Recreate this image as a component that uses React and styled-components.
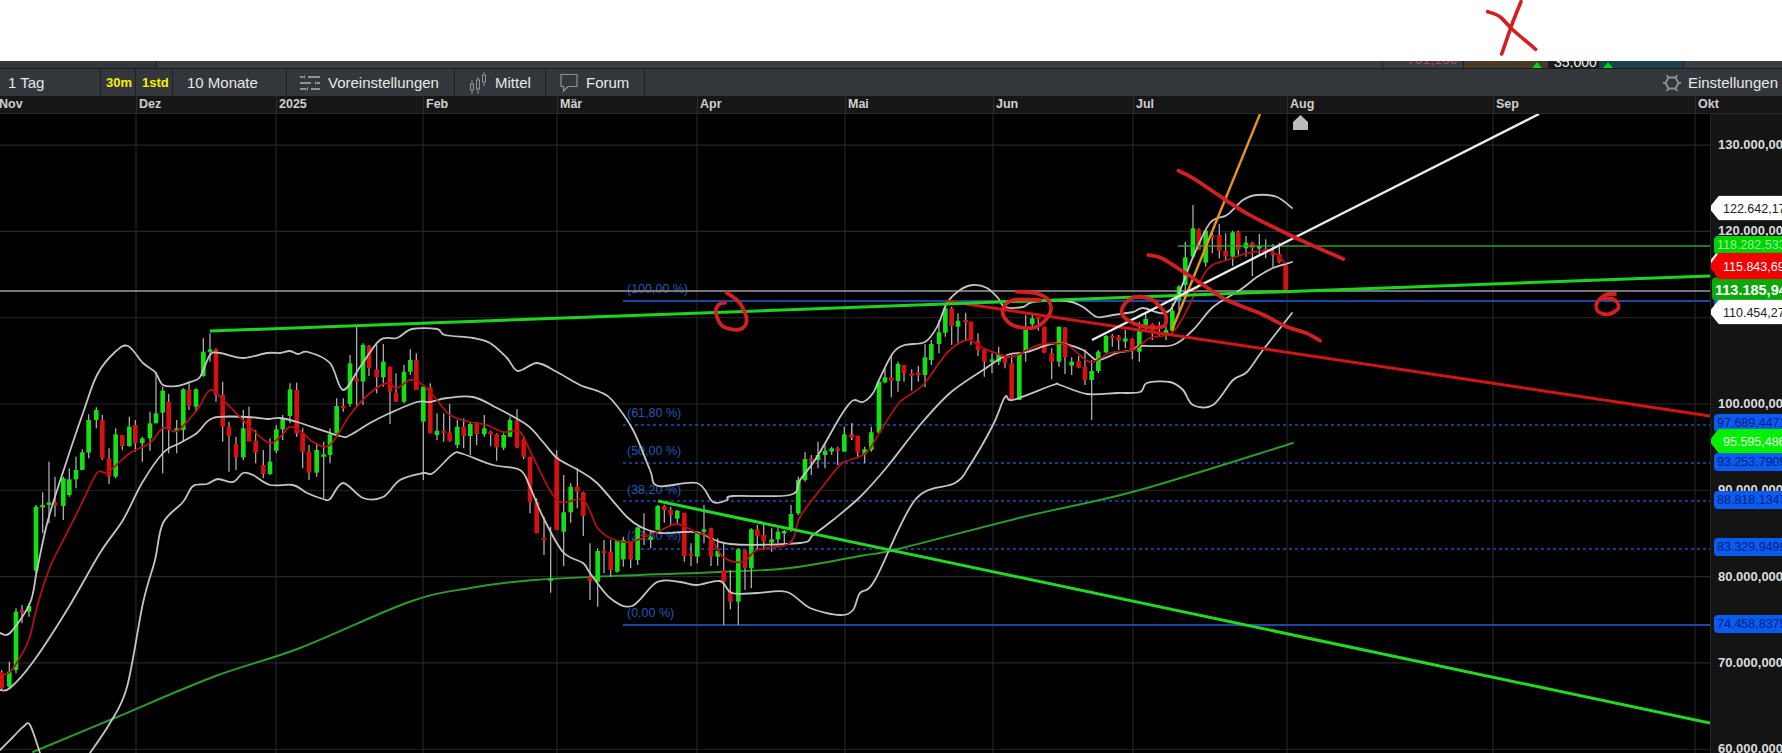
import React from 'react';
import styled, { createGlobalStyle } from 'styled-components';

const GlobalStyle = createGlobalStyle`
  html, body { margin: 0; padding: 0; background: #fff; }
  body { font-family: "Liberation Sans", Arial, sans-serif; overflow: hidden; }
`;

const W = 1710;
const H = 639; // chart area height, starts at y=114
const TOP = 114;

const priceY = (p) => 404 - (p - 100) * 8.63;

// [x, wickTop, wickBottom, bodyTop, bodyBottom, colour], read off crops, mapped back with crop()
const crop = (ox, oy, rows) =>
  rows.map(([x, a, b, c, d, k]) => [ox + x / 3, oy + a / 3, oy + b / 3, oy + c / 3, oy + d / 3, k]);

const cropPts = (ox, oy, rows) => rows.map(([x, y]) => [ox + x / 3, oy + y / 3]);

const parsePts = (str) => str.split(' ').map((s) => s.split(',').map(Number));

// catmull-rom through the points, the chart curves are not angular
const smooth = (pts) => {
  let d = `M${pts[0][0]} ${pts[0][1]}`;
  for (let i = 0; i < pts.length - 1; i++) {
    const p0 = pts[i - 1] || pts[i];
    const p1 = pts[i];
    const p2 = pts[i + 1];
    const p3 = pts[i + 2] || p2;
    const c1x = p1[0] + (p2[0] - p0[0]) / 6;
    const c1y = p1[1] + (p2[1] - p0[1]) / 6;
    const c2x = p2[0] - (p3[0] - p1[0]) / 6;
    const c2y = p2[1] - (p3[1] - p1[1]) / 6;
    d += `C${c1x.toFixed(1)} ${c1y.toFixed(1)} ${c2x.toFixed(1)} ${c2y.toFixed(1)} ${p2[0].toFixed(1)} ${p2[1].toFixed(1)}`;
  }
  return d;
};

const CANDLES = [
  ...crop(0, 320, [
    [5, 1050, 1110, 1060, 1105, 'r'], [28, 1025, 1105, 1055, 1100, 'g'], [48, 865, 1060, 875, 1050, 'g'],
    [66, 855, 910, 870, 875, 'r'], [87, 848, 890, 858, 875, 'g'], [108, 555, 760, 560, 752, 'g'],
    [128, 517, 640, 555, 560, 'g'], [147, 425, 610, 547, 553, 'g'], [165, 470, 590, 547, 557, 'r'],
    [190, 470, 600, 475, 558, 'g'], [208, 445, 530, 478, 525, 'g'], [228, 410, 505, 450, 478, 'g'],
    [247, 388, 450, 397, 450, 'g'], [266, 283, 415, 300, 398, 'g'], [289, 262, 325, 270, 300, 'g'],
    [307, 285, 420, 300, 415, 'r'], [327, 385, 492, 415, 470, 'r'], [347, 325, 475, 343, 470, 'g'],
    [367, 345, 390, 345, 378, 'r'], [388, 290, 380, 320, 378, 'g'], [406, 300, 395, 315, 370, 'r'],
    [427, 350, 425, 355, 370, 'g'], [450, 275, 392, 310, 355, 'g'], [468, 155, 310, 280, 310, 'g'],
    [488, 200, 460, 212, 278, 'g'], [506, 222, 400, 245, 327, 'r'], [530, 300, 400, 325, 330, 'g'],
    [550, 205, 365, 208, 330, 'g'], [567, 185, 270, 210, 258, 'r'], [588, 205, 275, 208, 260, 'g'],
    [610, 55, 170, 95, 168, 'g'], [630, 40, 125, 88, 95, 'g'], [648, 85, 245, 88, 225, 'r'],
    [668, 185, 365, 225, 320, 'r'], [687, 305, 455, 320, 348, 'r'], [708, 350, 450, 372, 412, 'r'],
    [730, 270, 420, 325, 412, 'g'], [747, 260, 345, 290, 365, 'r'], [767, 330, 430, 362, 398, 'r'],
    [790, 390, 475, 435, 462, 'r'], [810, 355, 465, 425, 462, 'g'], [829, 315, 400, 328, 392, 'g'],
    [848, 285, 360, 297, 328, 'g'], [870, 190, 310, 208, 288, 'g'], [890, 188, 350, 210, 340, 'r'],
  ]),
  ...crop(280, 300, [
    [68, 385, 505, 400, 455, 'r'], [87, 435, 540, 455, 518, 'r'], [110, 430, 530, 450, 518, 'g'],
    [131, 425, 595, 463, 467, 'g'], [150, 385, 490, 403, 465, 'g'], [170, 295, 400, 318, 400, 'g'],
    [190, 295, 335, 318, 323, 'r'], [210, 165, 320, 190, 312, 'g'], [230, 80, 320, 235, 245, 'r'],
    [249, 130, 315, 135, 245, 'g'], [267, 135, 228, 138, 205, 'r'], [290, 135, 280, 208, 232, 'r'],
    [310, 132, 260, 185, 232, 'g'], [330, 200, 372, 200, 275, 'r'], [348, 220, 305, 278, 305, 'r'],
    [372, 195, 310, 215, 305, 'g'], [391, 148, 225, 180, 215, 'g'], [409, 160, 270, 180, 270, 'r'],
    [430, 260, 540, 260, 365, 'g'], [451, 250, 400, 262, 400, 'r'], [471, 340, 420, 392, 405, 'g'],
    [491, 340, 425, 392, 396, 'r'], [509, 312, 425, 397, 423, 'r'], [532, 360, 445, 380, 435, 'g'],
    [551, 355, 445, 380, 408, 'r'], [571, 365, 465, 372, 408, 'g'], [590, 365, 435, 370, 402, 'r'],
    [613, 345, 410, 385, 403, 'g'], [632, 392, 438, 395, 403, 'r'], [650, 400, 482, 402, 442, 'r'],
    [671, 400, 450, 405, 443, 'g'], [690, 350, 410, 360, 410, 'g'], [711, 328, 445, 362, 442, 'r'],
    [731, 408, 478, 418, 470, 'r'], [750, 470, 640, 470, 605, 'r'], [770, 595, 700, 605, 700, 'r'],
  ]),
  ...crop(540, 400, [
    [12, 350, 465, 413, 420, 'r'], [32, 380, 578, 535, 540, 'g'], [50, 150, 390, 170, 390, 'r'],
    [71, 225, 498, 337, 395, 'g'], [92, 250, 368, 260, 337, 'g'], [112, 205, 325, 260, 275, 'r'],
    [130, 275, 408, 277, 348, 'r'], [150, 430, 600, 530, 543, 'r'], [173, 445, 620, 453, 545, 'g'],
    [192, 420, 520, 452, 455, 'r'], [212, 420, 530, 455, 510, 'r'], [232, 420, 518, 420, 515, 'g'],
    [250, 410, 500, 420, 478, 'g'], [272, 425, 505, 425, 478, 'r'], [293, 380, 495, 382, 480, 'g'],
    [312, 340, 435, 400, 405, 'r'], [332, 395, 445, 410, 420, 'g'], [353, 315, 390, 318, 390, 'g'],
    [373, 315, 368, 318, 330, 'r'], [392, 320, 375, 330, 345, 'r'], [412, 330, 375, 332, 356, 'g'],
    [433, 338, 485, 338, 468, 'r'], [453, 430, 498, 460, 465, 'r'], [472, 395, 490, 395, 470, 'g'],
    [492, 315, 430, 388, 395, 'g'], [513, 383, 498, 385, 470, 'r'], [533, 415, 497, 452, 470, 'g'],
    [551, 425, 675, 510, 545, 'r'], [571, 510, 628, 575, 605, 'r'], [595, 445, 675, 448, 605, 'g'],
    [615, 450, 570, 450, 505, 'r'], [634, 385, 565, 388, 505, 'g'], [652, 375, 450, 388, 408, 'r'],
    [671, 370, 450, 405, 425, 'r'], [695, 385, 455, 418, 428, 'g'], [714, 385, 430, 395, 418, 'g'],
    [733, 390, 430, 393, 400, 'g'], [753, 315, 395, 342, 385, 'g'], [775, 230, 345, 240, 340, 'g'],
    [795, 157, 245, 177, 240, 'g'], [814, 165, 225, 175, 180, 'r'], [834, 125, 205, 165, 180, 'g'],
    [855, 135, 205, 152, 165, 'g'], [875, 140, 165, 145, 155, 'g'], [893, 140, 195, 145, 150, 'r'],
    [913, 80, 155, 103, 155, 'g'], [935, 70, 120, 103, 106, 'r'],
  ]),
  ...crop(850, 270, [
    [5, 460, 510, 495, 498, 'r'], [23, 497, 565, 497, 548, 'r'], [44, 530, 580, 538, 552, 'g'],
    [64, 470, 545, 487, 540, 'g'], [87, 335, 490, 335, 488, 'g'], [105, 295, 340, 322, 337, 'g'],
    [124, 258, 382, 322, 332, 'r'], [144, 275, 365, 282, 333, 'g'], [162, 285, 335, 285, 310, 'r'],
    [185, 298, 362, 310, 313, 'r'], [205, 288, 335, 308, 312, 'r'], [225, 222, 352, 262, 315, 'g'],
    [244, 210, 285, 222, 270, 'g'], [267, 150, 250, 187, 222, 'g'], [286, 110, 200, 115, 188, 'g'],
    [305, 110, 225, 115, 168, 'r'], [324, 130, 225, 152, 170, 'g'], [347, 128, 210, 150, 152, 'r'],
    [363, 155, 225, 155, 210, 'r'], [384, 190, 258, 212, 240, 'r'], [403, 238, 320, 238, 275, 'r'],
    [426, 250, 310, 268, 275, 'g'], [446, 230, 285, 252, 275, 'g'], [465, 255, 295, 260, 280, 'r'],
    [485, 255, 390, 280, 390, 'r'], [508, 250, 390, 250, 390, 'g'], [527, 135, 275, 177, 245, 'g'],
    [547, 130, 175, 145, 163, 'g'], [565, 140, 182, 140, 148, 'r'], [583, 170, 250, 170, 248, 'r'],
    [605, 235, 328, 250, 275, 'r'], [627, 170, 290, 170, 275, 'g'], [645, 172, 312, 172, 262, 'r'],
    [665, 262, 315, 275, 287, 'g'], [686, 258, 295, 273, 293, 'r'], [705, 238, 345, 290, 330, 'r'],
    [725, 270, 450, 303, 330, 'g'], [745, 240, 310, 245, 303, 'g'], [768, 195, 250, 198, 247, 'g'],
    [787, 192, 230, 197, 200, 'r'], [806, 195, 240, 200, 212, 'r'], [826, 180, 235, 205, 215, 'g'],
    [847, 205, 268, 207, 240, 'r'], [868, 155, 275, 182, 245, 'g'], [887, 130, 180, 147, 165, 'g'],
  ]),
  ...crop(1100, 100, [
    [157, 670, 720, 672, 700, 'r'], [178, 665, 710, 695, 705, 'r'], [198, 680, 720, 690, 700, 'g'],
    [217, 610, 700, 632, 692, 'g'], [237, 555, 630, 560, 600, 'g'], [256, 425, 590, 472, 555, 'g'],
    [279, 315, 465, 385, 470, 'g'], [296, 385, 440, 388, 450, 'r'], [317, 390, 500, 392, 488, 'g'],
    [337, 400, 460, 405, 408, 'r'], [358, 372, 475, 405, 452, 'r'], [377, 400, 480, 452, 470, 'r'],
    [398, 392, 498, 397, 470, 'g'], [415, 392, 465, 397, 450, 'r'], [438, 408, 470, 428, 445, 'g'],
    [457, 425, 528, 428, 445, 'r'], [478, 402, 465, 438, 445, 'g'], [497, 418, 475, 445, 449, 'r'],
    [519, 432, 502, 458, 463, 'r'], [538, 428, 490, 462, 487, 'r'], [557, 490, 578, 495, 570, 'r'],
  ]),
];

const BAND_UPPER = parsePts('0,633 10,633 30,603 37,570 48,520 67,460 83,413 97,375 115,352 128,346 143,363 155,372 163,385 177,386 190,382 200,377 210,355 220,353 243,358 267,353 280,353 290,351 298,354 308,352 330,363 343,390 360,367 380,340 397,338 412,329 437,329 445,335 473,338 490,343 507,358 518,371 537,363 557,372 580,385 600,392 612,400 633,430 650,470 658,486 697,483 713,502 727,500 733,496 790,495 800,480 817,457 840,417 850,403 855,400 863,402 873,393 880,378 893,353 905,345 925,342 937,327 947,303 960,290 973,285 987,288 998,298 1005,307 1023,307 1033,302 1067,301 1083,307 1097,317 1113,315 1133,312 1143,308 1170,310 1193,257 1210,223 1227,215 1243,200 1257,195 1277,197 1292,208');
const BAND_MIDDLE = parsePts('0,690 10,688 33,662 67,610 100,553 123,520 142,483 163,453 180,443 197,433 213,418 247,417 267,419 280,418 297,422 340,436 350,435 370,423 390,413 417,402 430,402 447,398 473,397 497,408 527,425 543,442 557,458 578,470 597,483 627,517 643,528 660,533 683,532 700,533 730,544 800,543 813,535 833,520 860,497 887,467 920,425 950,393 983,370 1007,355 1027,352 1057,343 1083,350 1097,360 1117,353 1133,350 1140,346 1173,345 1193,330 1213,307 1240,290 1257,277 1273,268 1292,262');
const BAND_LOWER_A = parsePts('0,750 13,737 23,727 30,725 40,753');
const BAND_LOWER_B = parsePts('90,753 110,723 127,687 143,603 155,560 163,523 183,502 193,486 207,484 218,479 233,482 243,473 253,475 270,485 293,485 307,493 323,499 330,499 343,483 363,498 383,497 400,480 423,473 433,473 453,454 463,454 493,465 520,470 530,487 543,517 563,552 583,563 590,573 610,598 632,606 657,582 680,582 697,585 720,581 732,593 757,593 787,592 810,608 840,615 853,610 860,593 875,580 915,500 955,483 970,465 993,425 1005,397 1013,400 1053,385 1060,385 1087,394 1117,393 1140,392 1147,383 1170,382 1183,390 1193,405 1213,405 1233,380 1247,372 1263,350 1292,313');
const RED_MA = parsePts('0,673 10,672 28,642 37,607 50,567 67,533 82,503 97,473 108,472 130,453 150,443 163,428 177,431 197,410 210,390 223,400 240,417 267,442 280,437 290,427 303,433 313,442 330,445 350,415 370,393 387,383 397,388 410,380 423,385 437,400 450,415 470,422 487,425 503,432 520,432 533,457 557,500 583,500 597,527 610,538 630,542 657,532 677,524 697,533 710,537 723,557 743,562 757,550 790,543 800,517 820,490 840,465 850,460 867,452 883,427 900,402 923,385 947,353 967,340 983,348 1010,357 1027,350 1043,344 1067,345 1090,362 1110,353 1133,350 1150,338 1172,333 1187,310 1207,270 1227,260 1253,252 1273,252 1285,263');
const LONG_MA = parsePts('33,752 110,720 213,677 300,648 409,602 470,588 534,580 640,575 720,572 790,568 860,556 898,549 1023,517 1136,491 1293,443');

const INK_MARKS = [
  { pts: cropPts(1100, 100, [[235, 212], [280, 235], [370, 295], [440, 340], [580, 410], [730, 477]]) },
  { pts: cropPts(1100, 100, [[145, 465], [185, 475], [250, 515], [310, 555], [380, 600], [480, 640], [560, 680], [620, 700], [660, 722]]) },
  { pts: cropPts(850, 270, [[500, 65], [560, 70], [595, 90], [600, 130], [560, 170], [500, 170], [465, 145], [460, 115], [490, 90], [570, 90]]) },
  { pts: cropPts(1100, 100, [[170, 605], [120, 590], [80, 605], [65, 640], [100, 670], [160, 683], [195, 675], [195, 640], [165, 605]]) },
  { pts: cropPts(690, 270, [[110, 68], [150, 100], [170, 150], [150, 178], [100, 170], [78, 130], [85, 105], [105, 98]]) },
  { pts: cropPts(1580, 130, [[105, 492], [75, 495], [50, 520], [55, 545], [85, 553], [115, 535], [105, 510], [70, 505]]) },
];

const MONTHS = [
  { label: 'Nov', x: -1, line: null },
  { label: 'Dez', x: 139, line: 136 },
  { label: '2025', x: 279, line: 276 },
  { label: 'Feb', x: 426, line: 423 },
  { label: 'Mär', x: 560, line: 557 },
  { label: 'Apr', x: 700, line: 697 },
  { label: 'Mai', x: 848, line: 845 },
  { label: 'Jun', x: 996, line: 993 },
  { label: 'Jul', x: 1136, line: 1133 },
  { label: 'Aug', x: 1290, line: 1287 },
  { label: 'Sep', x: 1496, line: 1493 },
  { label: 'Okt', x: 1698, line: 1695 },
];
const TICKS = [130, 120, 100, 90, 80, 70, 60];
const GRID_PRICES = [130, 120, 110, 100, 90, 80, 70, 60];

const FIB_LINES = [
  { label: '(100,00 %)', y: 301, textY: 290, solid: true },
  { label: '(61,80 %)', y: 425, textY: 414 },
  { label: '(50,00 %)', y: 463, textY: 452 },
  { label: '(38,20 %)', y: 501, textY: 491 },
  { label: '(23,60 %)', y: 549, textY: 537 },
  { label: '(0,00 %)', y: 625, textY: 614, solid: true },
];

// order matters, later tags lie on top of earlier ones
const TAGS = [
  { text: '', y: 301, kind: 'blue' },
  { text: '', y: 262, kind: 'white' },
  { text: '118.282,533', y: 245, kind: 'green' },
  { text: '122.642,17', y: 208, kind: 'white' },
  { text: '113.185,94', y: 289, kind: 'current' },
  { text: '110.454,27', y: 312, kind: 'white' },
  { text: '115.843,69', y: 266, kind: 'red' },
  { text: '97.689,4471', y: 423, kind: 'blue' },
  { text: '93.253,7909', y: 462, kind: 'blue' },
  { text: '88.818,1347', y: 500, kind: 'blue' },
  { text: '83.329,9499', y: 547, kind: 'blue' },
  { text: '74.458,8375', y: 624, kind: 'blue' },
  { text: '95.595,486', y: 441, kind: 'lime' },
];

const Page = styled.div`
  width: 1782px;
  height: 753px;
  display: flex;
  flex-direction: column;
  overflow: hidden;
`;

const WhiteBand = styled.div`
  height: 61px;
  background: #fff;
  flex: none;
  position: relative;
`;

const CrossMark = styled.svg`
  position: absolute;
  left: 1480px;
  top: 0;
  width: 64px;
  height: 61px;
`;

const TopStrip = styled.div`
  height: 7px;
  flex: none;
  display: flex;
  background: #3a3e42;
  overflow: hidden;
  border-bottom: 1px solid #17191a;
`;

const StripCell = styled.div`
  width: ${(p) => p.$w}px;
  flex: none;
  display: flex;
  align-items: flex-end;
  justify-content: ${(p) => p.$justify || 'flex-start'};
  padding: 0 ${(p) => p.$pad || 0}px ${(p) => p.$lift || 0}px;
  box-sizing: border-box;
  background: ${(p) => p.$bg || 'transparent'};
  border-left: ${(p) => (p.$rule ? '1px solid #1c1e20' : 'none')};
  color: ${(p) => p.$color || '#eee'};
  font-size: 14px;
  line-height: 11px;
`;

const UpMark = styled.span`
  width: 0;
  height: 0;
  border-left: 5px solid transparent;
  border-right: 5px solid transparent;
  border-bottom: 6px solid #00d020;
`;

const Toolbar = styled.div`
  height: 27px;
  flex: none;
  display: flex;
  align-items: stretch;
  background: #33373b;
  color: #e6e8ea;
  font-size: 15px;
`;

const ToolItem = styled.div`
  width: ${(p) => p.$w}px;
  flex: none;
  box-sizing: border-box;
  display: flex;
  align-items: center;
  gap: 8px;
  padding-left: ${(p) => p.$pad}px;
  border-right: 1px solid #1e2123;
  color: ${(p) => (p.$active ? '#f5f000' : 'inherit')};
  font-weight: ${(p) => (p.$active ? 700 : 400)};
  font-size: ${(p) => (p.$active ? '13px' : 'inherit')};
  white-space: nowrap;
`;

const ToolSpacer = styled.div`
  flex: 1;
`;

const SettingsItem = styled.div`
  display: flex;
  align-items: center;
  gap: 7px;
  margin-right: 4px;
  white-space: nowrap;
`;

const TimeAxis = styled.div`
  height: 17px;
  flex: none;
  position: relative;
  background: #161616;
  border-bottom: 1px solid #2a2a2a;
`;

const MonthLabel = styled.span`
  position: absolute;
  top: 1px;
  color: #cfcfcf;
  font-size: 12.5px;
  font-weight: 700;
  line-height: 15px;
`;

const MonthRule = styled.span`
  position: absolute;
  top: 0;
  bottom: 0;
  width: 1px;
  background: #2b2b2b;
`;

const Body = styled.div`
  flex: 1;
  min-height: 0;
  display: flex;
`;

const ChartPane = styled.div`
  width: ${W}px;
  flex: none;
  background: #000;
  overflow: hidden;
`;

const ChartSvg = styled.svg`
  display: block;
  width: ${W}px;
  height: ${H}px;
`;

const FibText = styled.text`
  fill: #2058b8;
  font-family: "Liberation Sans", Arial, sans-serif;
  font-size: 12.5px;
  dominant-baseline: middle;
`;

const PriceAxis = styled.div`
  flex: 1;
  position: relative;
  background: #141414;
  overflow: hidden;
  border-left: 1px solid #262626;
`;

const Tick = styled.span`
  position: absolute;
  left: 7px;
  color: #dcdcdc;
  font-size: 13px;
  font-weight: 700;
  line-height: 14px;
  white-space: nowrap;
  transform: translateY(-50%);
`;

const TAG_KINDS = {
  white: { bg: '#fff', color: '#222', left: -2, arrow: true, h: 25 },
  red: { bg: '#f40000', color: '#fff', left: -2, arrow: true, h: 27 },
  lime: { bg: '#00f000', color: '#e8ffe8', left: -2, arrow: true, h: 25 },
  green: { bg: '#00d200', color: '#9ff09f', left: 3, h: 18 },
  current: { bg: '#0aa80a', color: '#fff', left: 1, h: 23, bold: true, size: 14.5 },
  blue: { bg: '#0a5cf0', color: '#02207f', left: 3, h: 18 },
};

const Tag = styled.div`
  position: absolute;
  right: -4px;
  left: ${(p) => TAG_KINDS[p.$kind].left}px;
  height: ${(p) => TAG_KINDS[p.$kind].h}px;
  box-sizing: border-box;
  display: flex;
  align-items: center;
  padding-left: ${(p) => (TAG_KINDS[p.$kind].arrow ? 14 : 3)}px;
  background: ${(p) => TAG_KINDS[p.$kind].bg};
  color: ${(p) => TAG_KINDS[p.$kind].color};
  font-size: ${(p) => TAG_KINDS[p.$kind].size || 12.5}px;
  font-weight: ${(p) => (TAG_KINDS[p.$kind].bold ? 700 : 400)};
  white-space: nowrap;
  border-radius: ${(p) => (TAG_KINDS[p.$kind].arrow ? 0 : '4px 0 0 4px')};
  clip-path: ${(p) => (TAG_KINDS[p.$kind].arrow ? 'polygon(0 50%, 10px 0, 100% 0, 100% 100%, 10px 100%)' : 'none')};
  transform: translateY(-50%);
`;

const SlidersIcon = () => (
  <svg width="20" height="18" viewBox="0 0 20 18" fill="none" stroke="#8f9396" strokeWidth="2.2">
    <path d="M0 3h3M8 3h12" />
    <path d="M0 9h11M17 9h3" />
    <path d="M0 15h6M11 15h9" />
    <path d="M5 1l-2 2 2 2zM15 7l2 2-2 2zM8 13l-2 2 2 2z" fill="#8f9396" stroke="none" />
  </svg>
);

const CandleIcon = () => (
  <svg width="18" height="24" viewBox="0 0 18 24" fill="none" stroke="#8f9396" strokeWidth="1">
    <path d="M3 9v14M9 6v17M15 1v14" />
    <rect x="1.5" y="13" width="3" height="6" fill="#33373b" />
    <rect x="7.5" y="9" width="3" height="9" fill="#33373b" />
    <rect x="13.5" y="4" width="3" height="7" fill="#33373b" />
  </svg>
);

const ChatIcon = () => (
  <svg width="18" height="20" viewBox="0 0 18 20" fill="none" stroke="#8f9396" strokeWidth="1.2">
    <path d="M1 1.5h16v12H8L3.5 18v-4.5H1z" />
  </svg>
);

const GearIcon = () => (
  <svg width="18" height="18" viewBox="0 0 18 18" fill="none" stroke="#8f9396" strokeWidth="1.8">
    <path d="M5.5 3.5h7l3 5.5-3 5.5h-7l-3-5.5z" />
    <path d="M0 9h2.5M15.5 9H18M3.5 1l2 2.5M14.5 1l-2 2.5M3.5 17l2-2.5M14.5 17l-2-2.5" />
  </svg>
);

const Curve = ({ points, color, width }) => (
  <path
    d={smooth(points)}
    fill="none"
    stroke={color}
    strokeWidth={width}
    strokeLinejoin="round"
    strokeLinecap="round"
  />
);

const Candle = ({ data }) => {
  const [x, hi, lo, top, bot, k] = data;
  const fill = k === 'g' ? '#12e212' : '#d81010';
  return (
    <g>
      <line x1={x} x2={x} y1={hi} y2={lo} stroke="#ababab" strokeWidth="1.3" />
      <rect x={x - 2.3} y={top} width="4.6" height={Math.max(bot - top, 2.5)} fill={fill} />
    </g>
  );
};

const INK = '#d21f1f';

const Chart = () => (
  // y inside the svg is page y, the viewBox moves it under the axis bar
  <ChartSvg viewBox={`0 ${TOP} ${W} ${H}`}>
    {MONTHS.filter((m) => m.line).map((m) => (
      <line key={m.label} x1={m.line} x2={m.line} y1={TOP} y2={TOP + H} stroke="#272727" strokeWidth="1.1" />
    ))}
    {GRID_PRICES.map((p) => (
      <line key={p} x1="0" x2={W} y1={priceY(p)} y2={priceY(p)} stroke="#272727" strokeWidth="1.1" />
    ))}

    {FIB_LINES.map((f) => (
      <g key={f.label}>
        <line
          x1="623"
          x2={W}
          y1={f.y}
          y2={f.y}
          stroke={f.solid ? '#1a47a8' : '#1d4fb8'}
          strokeWidth={f.solid ? 2 : 1.4}
          strokeDasharray={f.solid ? undefined : '3 3'}
        />
        <FibText x="627" y={f.textY}>{f.label}</FibText>
      </g>
    ))}

    <Curve points={LONG_MA} color="#2c9c2c" width="1.9" />
    <line x1="0" x2={W} y1="291" y2="291" stroke="#9c9c9c" strokeWidth="1.4" />

    {CANDLES.map((c, i) => <Candle key={i} data={c} />)}

    <Curve points={BAND_UPPER} color="#c4c4c4" width="1.8" />
    <Curve points={BAND_MIDDLE} color="#c4c4c4" width="1.8" />
    <Curve points={BAND_LOWER_A} color="#c4c4c4" width="1.8" />
    <Curve points={BAND_LOWER_B} color="#c4c4c4" width="1.8" />
    <Curve points={RED_MA} color="#b01212" width="1.8" />

    <line x1="1178" x2={W} y1="246" y2="246" stroke="#2f9e2f" strokeWidth="1.4" />
    <line x1="947" y1="301" x2={W} y2="416" stroke="#d01515" strokeWidth="3" />
    <line x1="658" y1="501" x2={W} y2="723" stroke="#22d822" strokeWidth="3" />
    <line x1="210" y1="331" x2={W} y2="276" stroke="#1ed51e" strokeWidth="3" />
    <line x1="1172" y1="330" x2="1260" y2="114" stroke="#e8951a" strokeWidth="2.4" />
    <line x1="1092" y1="340" x2="1539" y2="114" stroke="#ececec" strokeWidth="2.4" />

    <path d="M1293 130v-8l7.5-7 7.5 7v8z" fill="#bcbcbc" />

    {/* hand drawn marks on top of the chart */}
    {INK_MARKS.map((m, i) => (
      <path
        key={i}
        d={smooth(m.pts)}
        fill="none"
        stroke={INK}
        strokeWidth="3.8"
        strokeLinecap="round"
        strokeLinejoin="round"
      />
    ))}
  </ChartSvg>
);

const App = () => (
  <Page>
    <GlobalStyle />
    <WhiteBand>
      <CrossMark viewBox="1480 0 64 61">
        <path
          d={smooth([[1487.7, 11.7], [1500, 16.7], [1513, 30], [1535.7, 49.3]])}
          fill="none"
          stroke={INK}
          strokeWidth="3.6"
          strokeLinecap="round"
        />
        <path
          d={smooth([[1521, 1.7], [1513, 21.7], [1501.7, 54]])}
          fill="none"
          stroke={INK}
          strokeWidth="3.6"
          strokeLinecap="round"
        />
      </CrossMark>
    </WhiteBand>
    <TopStrip>
      <StripCell $w={156} $bg="#33373b" />
      <StripCell $w={1226} $rule />
      <StripCell $w={81} $rule $color="#a84a4a" $pad={24} $lift={3}>701,100</StripCell>
      <StripCell $w={85} $rule $bg="#4a3a25" $pad={6} $justify="flex-end"><UpMark /></StripCell>
      <StripCell $w={50} $bg="#1c1c1c" $pad={6}>35,000</StripCell>
      <StripCell $w={85} $rule $bg="#1e3f4c" $pad={4}><UpMark /></StripCell>
      <StripCell $w={99} $rule $bg="#3a3e42" />
    </TopStrip>
    <Toolbar>
      <ToolItem $w={101} $pad={8}>1 Tag</ToolItem>
      <ToolItem $w={35} $pad={5} $active>30m</ToolItem>
      <ToolItem $w={37} $pad={6} $active>1std</ToolItem>
      <ToolItem $w={114} $pad={14}>10 Monate</ToolItem>
      <ToolItem $w={168} $pad={13}><SlidersIcon />Voreinstellungen</ToolItem>
      <ToolItem $w={91} $pad={14}><CandleIcon />Mittel</ToolItem>
      <ToolItem $w={99} $pad={14}><ChatIcon />Forum</ToolItem>
      <ToolSpacer />
      <SettingsItem><GearIcon />Einstellungen</SettingsItem>
    </Toolbar>
    <TimeAxis>
      {MONTHS.map((m) => (
        <React.Fragment key={m.label}>
          {m.line && <MonthRule style={{ left: m.line }} />}
          <MonthLabel style={{ left: m.x }}>{m.label}</MonthLabel>
        </React.Fragment>
      ))}
    </TimeAxis>
    <Body>
      <ChartPane>
        <Chart />
      </ChartPane>
      <PriceAxis>
        {TICKS.map((p) => (
          <Tick key={p} style={{ top: priceY(p) - TOP }}>{p}.000,000</Tick>
        ))}
        {TAGS.map((t, i) => (
          <Tag key={i} $kind={t.kind} style={{ top: t.y - TOP }}>{t.text}</Tag>
        ))}
      </PriceAxis>
    </Body>
  </Page>
);

export default App;
